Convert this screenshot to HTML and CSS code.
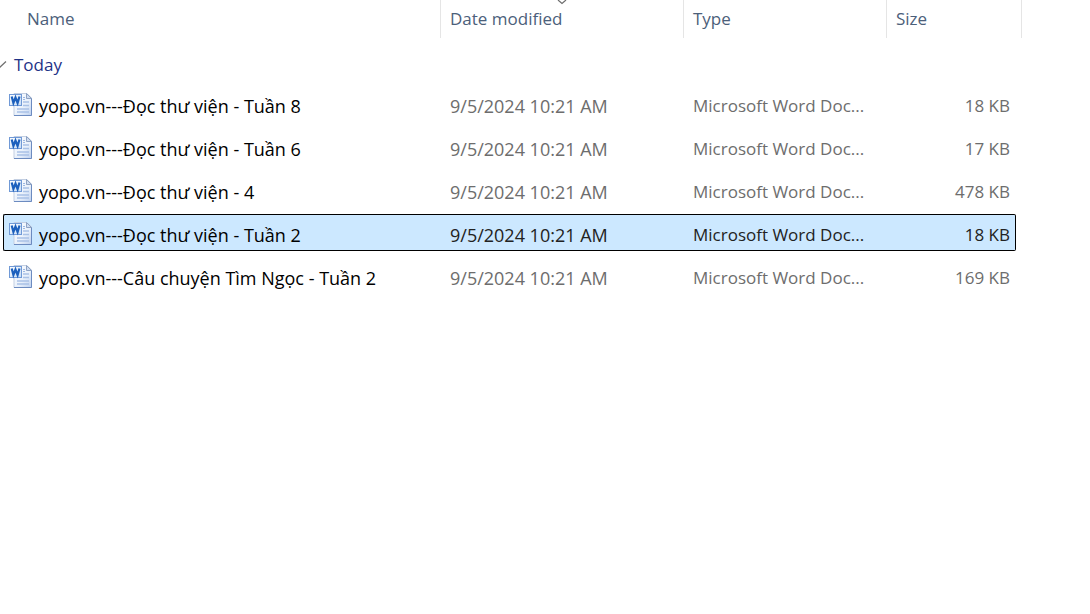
FILE: index.html
```html
<!DOCTYPE html>
<html lang="en">
<head>
<meta charset="utf-8">
<meta name="viewport" content="width=device-width, initial-scale=1">
<title>Files</title>
<link rel="stylesheet" href="styles.css">
</head>
<body>
<svg class="defs" width="0" height="0" aria-hidden="true">
  <defs>
    <linearGradient id="page" x1="0" y1="0" x2="1" y2="1">
      <stop offset="0" stop-color="#ffffff"/><stop offset=".6" stop-color="#e8f0fb"/><stop offset="1" stop-color="#bdd0ee"/>
    </linearGradient>
    <linearGradient id="tile" x1="0" y1="0" x2="1" y2="1">
      <stop offset="0" stop-color="#ffffff"/><stop offset="1" stop-color="#c5dcf6"/>
    </linearGradient>
  </defs>
  <symbol id="word" viewBox="0 0 24 24">
    <path d="M5 .500H18l4.500 4.500v17.500H5z" fill="url(#page)" stroke="#c3cfe2"/>
    <path d="M22.500 5v17.500H5" fill="none" stroke="#6c8bc0"/>
    <path d="M17.500 .500V5.500h5z" fill="#cfdcf0" stroke="#8fa3c4"/>
    <path d="M14 4.500h2M14 6.500h2" stroke="#9db8e2" fill="none"/>
    <path d="M14 9h6M14 12.500h6M8 16h12M8 19h12" stroke="#a9c1e6" stroke-width="1.500" fill="none"/>
    <rect x=".5" y="1.500" width="12" height="11" fill="url(#tile)" stroke="#7099d6"/>
    <path d="M2.700 3.500l1.700 6.500L6.500 4.500l2.100 5.500L10.500 3.500" fill="none" stroke="#1c60bd" stroke-width="2.200"/>
  </symbol>
</svg>
<main>
  <table class="files">
    <colgroup><col><col class="col-date"><col class="col-type"><col class="col-size"><col class="col-end"></colgroup>
    <thead>
      <tr>
        <th scope="col" class="first"><button type="button">Name</button></th>
        <th scope="col" aria-sort="descending"><button type="button">Date modified<svg class="sort" viewBox="0 0 10 5" aria-hidden="true"><path d="M1 0l4 3.500L9 0"/></svg></button></th>
        <th scope="col"><button type="button">Type</button></th>
        <th scope="col" colspan="2"><button type="button">Size</button></th>
      </tr>
    </thead>
    <tbody>
      <tr class="group">
        <th scope="rowgroup" colspan="5"><button type="button" aria-expanded="true"><svg class="fold" viewBox="0 0 7 10" aria-hidden="true"><path d="M-1 8L6 1.500"/></svg>Today</button></th>
      </tr>
      <tr class="file">
        <td><span class="name"><svg class="icon" aria-hidden="true"><use href="#word"/></svg>yopo.vn---Đọc thư viện - Tuần 8</span></td>
        <td class="date">9/5/2024 10:21 AM</td><td>Microsoft Word Doc...</td><td class="size">18 KB</td>
      </tr>
      <tr class="file">
        <td><span class="name"><svg class="icon" aria-hidden="true"><use href="#word"/></svg>yopo.vn---Đọc thư viện - Tuần 6</span></td>
        <td class="date">9/5/2024 10:21 AM</td><td>Microsoft Word Doc...</td><td class="size">17 KB</td>
      </tr>
      <tr class="file">
        <td><span class="name"><svg class="icon" aria-hidden="true"><use href="#word"/></svg>yopo.vn---Đọc thư viện - 4</span></td>
        <td class="date">9/5/2024 10:21 AM</td><td>Microsoft Word Doc...</td><td class="size">478 KB</td>
      </tr>
      <tr class="file selected" aria-selected="true">
        <td><span class="name"><svg class="icon" aria-hidden="true"><use href="#word"/></svg>yopo.vn---Đọc thư viện - Tuần 2</span></td>
        <td class="date">9/5/2024 10:21 AM</td><td>Microsoft Word Doc...</td><td class="size">18 KB</td>
      </tr>
      <tr class="file">
        <td><span class="name"><svg class="icon" aria-hidden="true"><use href="#word"/></svg>yopo.vn---Câu chuyện Tìm Ngọc - Tuần 2</span></td>
        <td class="date">9/5/2024 10:21 AM</td><td>Microsoft Word Doc...</td><td class="size">169 KB</td>
      </tr>
    </tbody>
  </table>
</main>
</body>
</html>
```

FILE: styles.css
```css
* { box-sizing: border-box; }

body {
  margin: 0;
  background: #fff;
  color: #6d6d6d;
  font: 17px/24px "Open Sans", "Noto Sans", sans-serif;
}

.defs { position: absolute; }

main { padding: 0 68px 0 3px; }

.files {
  width: 100%;
  margin-top: -6px;
  table-layout: fixed;
  border-collapse: separate;
  border-spacing: 0 6px;
}

.col-date { width: 243px; }
.col-type { width: 203px; }
.col-size { width: 129px; }
.col-end { width: 6px; }

button {
  margin: 0;
  padding: 0;
  border: 0;
  background: none;
  color: inherit;
  font: inherit;
  text-align: left;
}

th {
  padding: 0;
  font-weight: 400;
  text-align: left;
}

thead th {
  height: 38px;
  border-right: 1px solid #e5e5e5;
  color: #4c607a;
}

thead button {
  position: relative;
  display: block;
  width: 100%;
  height: 38px;
  padding-left: 9px;
}

thead .first button { padding-left: 24px; }

.sort {
  position: absolute;
  top: 0;
  left: 50%;
  width: 10px;
  height: 5px;
  margin-left: -5px;
}

.sort path, .fold path {
  fill: none;
  stroke: #6d6d6d;
  stroke-width: 1.2;
}

.group th {
  height: 35px;
  padding-top: 6px;
  color: #1e3287;
}

.group button {
  display: flex;
  align-items: center;
  gap: 7px;
  margin-left: -3px;
}

.fold { width: 7px; height: 10px; }

.file td {
  height: 37px;
  padding: 4px 9px 0;
  border: 1px solid transparent;
  border-width: 1px 0;
  white-space: nowrap;
}

.file td:first-child {
  padding: 4px 0 0 5px;
  border-left-width: 1px;
  color: #000;
}

.file .date, .file .name { font-size: 18px; }

.file .size {
  padding: 4px 5px 0;
  border-right-width: 1px;
  text-align: right;
}

.name {
  display: flex;
  align-items: flex-start;
  gap: 6px;
}

.icon {
  width: 24px;
  height: 24px;
  margin-top: -1px;
}

.selected td {
  border-color: #000;
  background: #cce8ff;
  color: #222;
}

.selected td:first-child { border-radius: 2px 0 0 2px; }
.selected .size { border-radius: 0 2px 2px 0; }
```
